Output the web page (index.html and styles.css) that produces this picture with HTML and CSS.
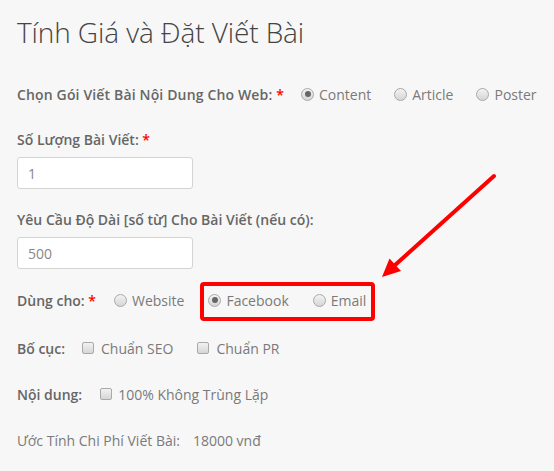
FILE: index.html
```html
<!DOCTYPE html>
<html lang="vi">
<head>
<meta charset="utf-8">
<title>Tính Giá và Đặt Viết Bài</title>
<link rel="stylesheet" href="styles.css">
</head>
<body>
<div class="page">
  <h1 class="title">Tính Giá và Đặt Viết Bài</h1>

  <div class="row row-goi">
    <span class="label">Chọn Gói Viết Bài Nội Dung Cho Web: <span class="req">*</span></span>
    <label class="opt"><input type="radio" name="goi" checked><span>Content</span></label>
    <label class="opt"><input type="radio" name="goi"><span>Article</span></label>
    <label class="opt"><input type="radio" name="goi"><span>Poster</span></label>
  </div>

  <div class="field field-first">
    <div class="label">Số Lượng Bài Viết: <span class="req">*</span></div>
    <input class="text" type="text" value="1">
  </div>

  <div class="field">
    <div class="label">Yêu Cầu Độ Dài [số từ] Cho Bài Viết (nếu có):</div>
    <input class="text" type="text" value="500">
  </div>

  <div class="row row-dung">
    <span class="label">Dùng cho: <span class="req">*</span></span>
    <label class="opt"><input type="radio" name="dung"><span>Website</span></label>
    <label class="opt"><input type="radio" name="dung" checked><span>Facebook</span></label>
    <label class="opt"><input type="radio" name="dung"><span>Email</span></label>
  </div>

  <div class="row row-bocuc">
    <span class="label">Bố cục:</span>
    <label class="opt"><input type="checkbox"><span>Chuẩn SEO</span></label>
    <label class="opt"><input type="checkbox"><span>Chuẩn PR</span></label>
  </div>

  <div class="row row-noidung">
    <span class="label">Nội dung:</span>
    <label class="opt"><input type="checkbox"><span>100% Không Trùng Lặp</span></label>
  </div>

  <div class="row row-price">
    <span class="price-label">Ước Tính Chi Phí Viết Bài:</span>
    <span class="price-value">18000 vnđ</span>
  </div>

  <svg class="annotation" width="554" height="471" viewBox="0 0 554 471">
    <rect x="202" y="284" width="171" height="35" rx="2" ry="2" fill="none" stroke="#ff0000" stroke-width="4"/>
    <line x1="494" y1="176" x2="394" y2="266" stroke="#ff0000" stroke-width="4" stroke-linecap="round"/>
    <polygon points="382,277 389.5,258.5 401,271" fill="#ff0000"/>
  </svg>
</div>
</body>
</html>
```

FILE: styles.css
```css
html, body {
  margin: 0;
  padding: 0;
  background: #f7f7f7;
}

body {
  font-family: "Open Sans", "Noto Sans", sans-serif;
  font-size: 14px;
  color: #777;
}

.page {
  position: relative;
  width: 554px;
  height: 471px;
  padding-left: 17px;
  box-sizing: border-box;
  overflow: hidden;
}

.title {
  margin: 0;
  padding-top: 12px;
  font-size: 28px;
  font-weight: 300;
  line-height: 40px;
  color: #444;
  letter-spacing: -0.1px;
}

.row {
  display: flex;
  align-items: center;
  height: 20px;
  line-height: 20px;
  white-space: nowrap;
}

.label {
  font-weight: 600;
  color: #666;
  line-height: 20px;
  white-space: nowrap;
}

.req {
  color: #ff0000;
}

.opt {
  display: inline-flex;
  align-items: center;
  gap: 5px;
  margin-right: 23px;
  color: #7a7a7a;
}

.row-goi {
  margin-top: 33px;
}
.row-goi .label { margin-right: 17px; letter-spacing: 0.15px; }

.field {
  margin-top: 21px;
}

.field-first { margin-top: 25px; }

.text {
  display: block;
  margin-top: 7px;
  width: 176px;
  height: 32px;
  box-sizing: border-box;
  padding: 0 10px;
  border: 1px solid #d4d4d4;
  border-radius: 3px;
  background: #fff;
  font-family: "Open Sans", "Noto Sans", sans-serif;
  font-size: 14px;
  color: #888;
  outline: none;
}

.row-dung {
  margin-top: 22px;
}
.row-dung .label { margin-right: 18px; }
.row-dung .opt { margin-right: 24px; }

.row-bocuc {
  margin-top: 28px;
}
.row-bocuc .label { margin-right: 17px; }
.row-bocuc .opt { margin-right: 24px; gap: 7px; }

.row-noidung {
  margin-top: 26px;
}
.row-noidung .label { margin-right: 18px; }
.row-noidung .opt { gap: 6px; }

.row-price {
  margin-top: 26px;
  color: #7a7a7a;
}
.price-label { margin-right: 13px; }

input[type="radio"], input[type="checkbox"] {
  -webkit-appearance: none;
  appearance: none;
  margin: 0;
  width: 13px;
  height: 13px;
  box-sizing: border-box;
  border: 1px solid #a9a9a9;
  background: linear-gradient(#f2f2f2, #d6d6d6);
  position: relative;
  flex: none;
  top: -1px;
}

input[type="radio"] {
  border-radius: 50%;
}

input[type="radio"]:checked::after {
  content: "";
  position: absolute;
  left: 2.5px;
  top: 2.5px;
  width: 6px;
  height: 6px;
  border-radius: 50%;
  background: #666;
}

input[type="checkbox"] {
  border-radius: 2px;
  width: 12px;
  height: 12px;
}

.annotation {
  position: absolute;
  left: 0;
  top: 0;
  pointer-events: none;
}
```
